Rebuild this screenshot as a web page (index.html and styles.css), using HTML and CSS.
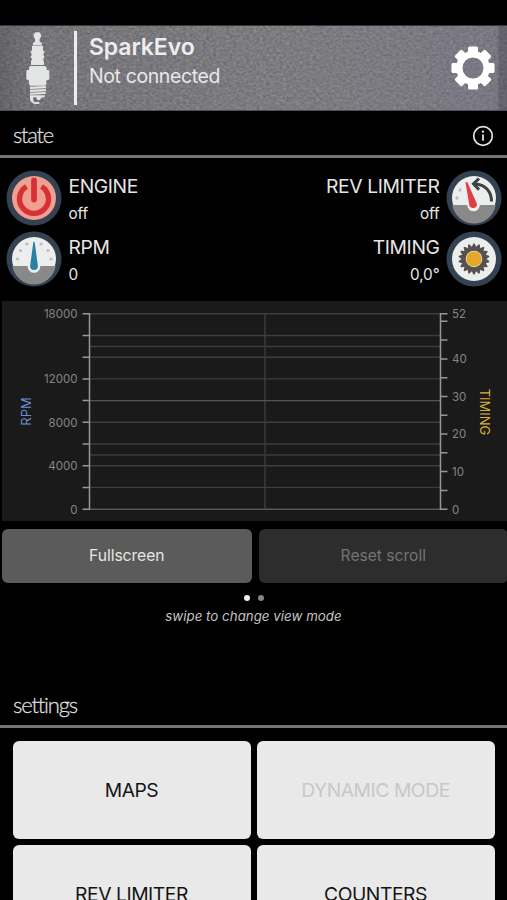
FILE: index.html
```html
<!DOCTYPE html>
<html lang="en">
<head>
<meta charset="utf-8">
<title>SparkEvo</title>
<link rel="stylesheet" href="styles.css">
</head>
<body>
<header class="header">
  <svg class="texture" width="507" height="86" aria-hidden="true">
    <defs>
      <filter id="grain" x="0" y="0" width="100%" height="100%" color-interpolation-filters="sRGB">
        <feTurbulence type="fractalNoise" baseFrequency="0.3 0.42" numOctaves="2" seed="8"/>
        <feColorMatrix values="0.2 0.08 0 0 0.335  0.2 0.08 0 0 0.33  0.2 0.08 0 0 0.345  0 0 0 0 1"/>
      </filter>
      <linearGradient id="tint">
        <stop offset="0" stop-color="#33333a" stop-opacity=".3"/>
        <stop offset=".08" stop-color="#55555c" stop-opacity=".1"/>
        <stop offset=".5" stop-color="#999" stop-opacity=".1"/>
        <stop offset=".95" stop-color="#7a7a9c" stop-opacity=".25"/>
        <stop offset=".98" stop-color="#77778c" stop-opacity=".25"/>
        <stop offset=".985" stop-color="#44445a" stop-opacity=".4"/>
      </linearGradient>
    </defs>
    <rect width="507" height="86" filter="url(#grain)"/>
    <rect width="507" height="86" fill="url(#tint)"/>
  </svg>
  <svg class="plug" viewBox="75 45 78 225" fill="#e3e5e5">
    <path d="M107 52h11l5 6v7l-4 7v8l6 3v8h-26v-8l6-3v-8l-4-7v-7z"/>
    <path d="M96 92h33v15l4 2v5l-3 2v5l3 2v5l-3 2v6l2 3v11H93v-11l2-3v-6l-3-2v-5l3-2v-5l-3-2v-5l4-2z"/>
    <path d="M90 153h46l4 5v7h6l2 3v24l-4 4h-5v12l-4 4H91l-4-4v-12h-4l-4-4v-24l3-3h5v-7z"/>
    <path d="M90 215l48-2v7l-48 2zM90 224l48-2v7l-48 2zM90 233l47-2v6l-47 2z"/>
    <path d="M90 241h45v4l-11 3-4 7h-7l-5-8h-8v11l5 4 13-1v6h-15l-11-8-2-8z"/>
  </svg>
  <div class="divider"></div>
  <div class="titles">
    <h1 class="title">SparkEvo</h1>
    <p class="subtitle">Not connected</p>
  </div>
  <svg class="gear" viewBox="-22 -22 44 44">
    <g fill="#fff">
      <path id="tooth" d="M-5-14V-20q0-1.500 1.500-1.500h7q1.500 0 1.500 1.500V-14z"/>
      <use href="#tooth" transform="rotate(45)"/><use href="#tooth" transform="rotate(90)"/>
      <use href="#tooth" transform="rotate(135)"/><use href="#tooth" transform="rotate(180)"/>
      <use href="#tooth" transform="rotate(225)"/><use href="#tooth" transform="rotate(270)"/>
      <use href="#tooth" transform="rotate(315)"/>
    </g>
    <circle r="13.700" fill="none" stroke="#fff" stroke-width="6.400"/>
  </svg>
</header>

<div class="section">
  <h2 class="section-name">state</h2>
  <svg class="info" viewBox="0 0 22 22" fill="none" stroke="#e4e4e4">
    <circle cx="11" cy="11" r="9.300" stroke-width="1.700"/>
    <path d="M11 9.500v6.300" stroke-width="1.800"/><circle cx="11" cy="6.600" r="1.200" fill="#e4e4e4" stroke="none"/>
  </svg>
</div>

<section class="status">
  <div class="stat">
    <svg class="badge" viewBox="0 0 56 56">
      <circle cx="28" cy="28" r="27.500" fill="#344150"/><circle cx="28" cy="28" r="22" fill="#efa090"/>
      <path d="M20.500 16.500a14.500 14.500 0 1 0 15 0" fill="none" stroke="#d73136" stroke-width="5.400"/>
      <path d="M28 11v19" stroke="#efa090" stroke-width="9"/>
      <path d="M28 10.500v19" stroke="#d73136" stroke-width="5.800" stroke-linecap="round"/>
    </svg>
    <div><div class="label">ENGINE</div><div class="value">off</div></div>
  </div>
  <div class="stat right">
    <div><div class="label">REV LIMITER</div><div class="value">off</div></div>
    <svg class="badge" viewBox="0 0 56 56">
      <circle cx="28" cy="28" r="27.500" fill="#344150"/><circle cx="28" cy="28" r="22" fill="#eceeee"/>
      <path d="M6.300 35h43.400a22 22 0 0 1-43.400 0z" fill="#898989"/>
      <g fill="#bdbdbd"><circle cx="14" cy="20" r="1.700"/><circle cx="11" cy="28" r="1.700"/></g>
      <circle cx="27.500" cy="35" r="6.300" fill="#eceeee"/>
      <path d="M19.500 12.500q1-1 2 0L31 34a4 4 0 0 1-7.500 2z" fill="#e23f45"/>
      <path d="M45.500 31.500C45.500 21 39 14.500 29 14" fill="none" stroke="#3e4242" stroke-width="3"/>
      <path d="M33 8.500l-5.500 5.300 5.500 6" fill="none" stroke="#3e4242" stroke-width="3"/>
    </svg>
  </div>
  <div class="stat">
    <svg class="badge" viewBox="0 0 56 56">
      <circle cx="28" cy="28" r="27.500" fill="#344150"/><circle cx="28" cy="28" r="22" fill="#eceeee"/>
      <path d="M6.300 35h43.400a22 22 0 0 1-43.400 0z" fill="#898989"/>
      <g fill="#b9bcbd"><circle cx="11.500" cy="28" r="1.600"/><circle cx="14.500" cy="19.500" r="1.600"/><circle cx="21" cy="13" r="1.600"/><circle cx="35" cy="13" r="1.600"/><circle cx="42" cy="19.500" r="1.600"/><circle cx="45" cy="28" r="1.600"/></g>
      <circle cx="28" cy="35.500" r="6.300" fill="#eceeee"/>
      <path d="M27.300 11.500q.7-1.500 1.400 0L31.900 35a3.900 3.900 0 0 1-7.800 0z" fill="#287fa6"/>
    </svg>
    <div><div class="label">RPM</div><div class="value">0</div></div>
  </div>
  <div class="stat right">
    <div><div class="label">TIMING</div><div class="value">0,0°</div></div>
    <svg class="badge" viewBox="-28 -28 56 56">
      <circle r="27.500" fill="#344150"/><circle r="22" fill="#eceeee"/>
      <g fill="#56524e">
        <circle r="12"/>
        <g id="spikes"><path id="spike" d="M-2.800-11L-.6-15.500H.6L2.800-11zM-2.800 11L-.6 15.500H.6L2.800 11z"/>
        <use href="#spike" transform="rotate(20)"/><use href="#spike" transform="rotate(40)"/></g>
        <use href="#spikes" transform="rotate(60)"/><use href="#spikes" transform="rotate(120)"/>
      </g>
      <circle r="8.300" fill="#e6e0cf"/><circle r="7.600" fill="#e4a728"/>
    </svg>
  </div>
</section>

<svg class="chart" width="505" height="220" viewBox="2 301 505 220">
  <g stroke="#3d3d3d" stroke-width="1.400">
    <path d="M89 313.800H441M89 335.500H441M89 346.500H441M89 357.200H441M89 378.900H441M89 422.300H441M89 444H441M89 455H441M89 465.700H441M89 487.400H441M265 313.800V509"/>
    <path d="M89 400.600H441M89 509.200H441" stroke="#555"/>
  </g>
  <g fill="none" stroke="#969696" stroke-width="1.500">
    <path d="M82.500 313.800H89.500V509.200H82.500M82.500 335.500H89M82.500 357.200H89M82.500 378.900H89M82.500 400.600H89M82.500 422.300H89M82.500 444H89M82.500 465.700H89M82.500 487.400H89"/>
    <path d="M447.500 313.800H440.500V509.200H447.500M441 321.300H447.500M441 340.100H447.500M441 358.900H447.500M441 377.700H447.500M441 396.500H447.500M441 415.200H447.500M441 434H447.500M441 452.800H447.500M441 471.600H447.500M441 490.400H447.500"/>
  </g>
  <g class="tick left-tick">
    <text x="77.500" y="318">18000</text><text x="77.500" y="383">12000</text><text x="77.500" y="426.500">8000</text><text x="77.500" y="470">4000</text><text x="77.500" y="513.500">0</text>
  </g>
  <g class="tick">
    <text x="452" y="318">52</text><text x="452" y="363">40</text><text x="452" y="400.500">30</text><text x="452" y="438">20</text><text x="452" y="475.700">10</text><text x="452" y="513.500">0</text>
  </g>
  <text class="axis rpm-axis" transform="translate(30.500 411.500) rotate(-90)" text-anchor="middle">RPM</text>
  <text class="axis timing-axis" transform="translate(479.500 412) rotate(90)" text-anchor="middle">TIMING</text>
</svg>

<div class="actions">
  <div class="action">Fullscreen</div>
  <div class="action disabled">Reset scroll</div>
</div>
<div class="dots"><i class="dot on"></i><i class="dot"></i></div>
<p class="hint">swipe to change view mode</p>

<div class="section settings">
  <h2 class="section-name">settings</h2>
</div>
<section class="tiles">
  <div class="tile"><span>MAPS</span></div>
  <div class="tile off"><span>DYNAMIC MODE</span></div>
  <div class="tile"><span>REV LIMITER</span></div>
  <div class="tile"><span>COUNTERS</span></div>
</section>
</body>
</html>
```
FILE: styles.css
```css
* { box-sizing: border-box; }
html, body { height: 900px; overflow: hidden; }
body { margin: 0; padding-top: 25px; background: #000; color: #e6e6e6; font-family: Inter, "Liberation Sans", sans-serif; }
h1, h2, p { margin: 0; font-weight: 400; }
svg { display: block; flex: none; }

.header { position: relative; display: flex; height: 86px; padding-left: 25px; border-top: 1px solid #37373a; border-bottom: 1px solid #505054; overflow: hidden; }
.texture { position: absolute; left: 0; top: 0; }
.plug { position: relative; width: 26px; height: 75px; margin-top: 4px; }
.divider { position: relative; width: 3px; height: 74px; margin: 5px 12px 0 23px; background: #eeeeef; }
.titles { position: relative; flex: 1; padding-top: 6px; }
.title { font-size: 23px; font-weight: 600; line-height: 30px; letter-spacing: -.1px; color: #ededee; }
.subtitle { font-size: 19.500px; line-height: 28px; letter-spacing: -.4px; color: #e8e8e9; }
.gear { position: relative; width: 44px; height: 44px; margin: 20px 12px 0 0; }

.section { display: flex; justify-content: space-between; height: 47px; padding: 0 13px; border-bottom: 3px solid #747474; }
.section-name { font-family: Lato, sans-serif; font-weight: 300; font-size: 22px; line-height: 28px; padding-top: 10px; letter-spacing: -1.300px; color: #dedede; -webkit-text-stroke: .3px #dedede; }
.info { width: 22px; height: 22px; margin: 13.500px 0 0; }

.status { display: grid; grid-template-columns: 1fr 1fr; row-gap: 5px; padding: 12px 5.500px 0 6.500px; }
.stat { display: flex; gap: 6px; height: 56px; }
.stat:not(.right) .badge { margin: 0 .5px 0 -.5px; }
.stat.right { justify-content: flex-end; text-align: right; }
.badge { width: 56px; height: 56px; }
.label { padding-top: 2px; font-size: 19.300px; line-height: 28px; letter-spacing: -.4px; white-space: nowrap; }
.value { font-size: 15.300px; line-height: 27px; letter-spacing: -.1px; }

.chart { margin: 14px 0 0 2px; background: #1a1a1a; }
.tick { font-size: 11.500px; fill: #858585; }
.left-tick { text-anchor: end; }
.axis { font-size: 13px; }
.rpm-axis { fill: #6b8fce; }
.timing-axis { fill: #d9ae39; }

.actions { display: grid; grid-template-columns: 249.500px 248.500px; gap: 7.500px; margin: 7.500px 0 0 2px; }
.action { height: 54px; border-radius: 6px; background: #5b5b5b; font-size: 15.700px; line-height: 54px; text-align: center; letter-spacing: -.05px; }
.disabled { background: #2d2d2d; color: #747474; }
.dots { display: flex; justify-content: center; gap: 8px; margin-top: 12px; }
.dot { width: 6px; height: 6px; border-radius: 50%; background: #858585; }
.on { background: #f0f0f0; }
.hint { margin-top: 5px; font-size: 13.300px; line-height: 20px; font-style: italic; letter-spacing: .02px; text-align: center; color: #c4c4c4; }

.settings { margin-top: 55.500px; height: 47px; }
.settings .section-name { letter-spacing: -1.200px; }
.tiles { display: grid; grid-template-columns: 1fr 1fr; grid-auto-rows: 98px; gap: 6px; padding: 13px 12.500px 0; }
.tile { display: flex; align-items: center; justify-content: center; border-radius: 6px; background: #e9e9e9; color: #141414; font-size: 19.300px; letter-spacing: -.45px; }
.off { color: #c8c8c8; }
```
